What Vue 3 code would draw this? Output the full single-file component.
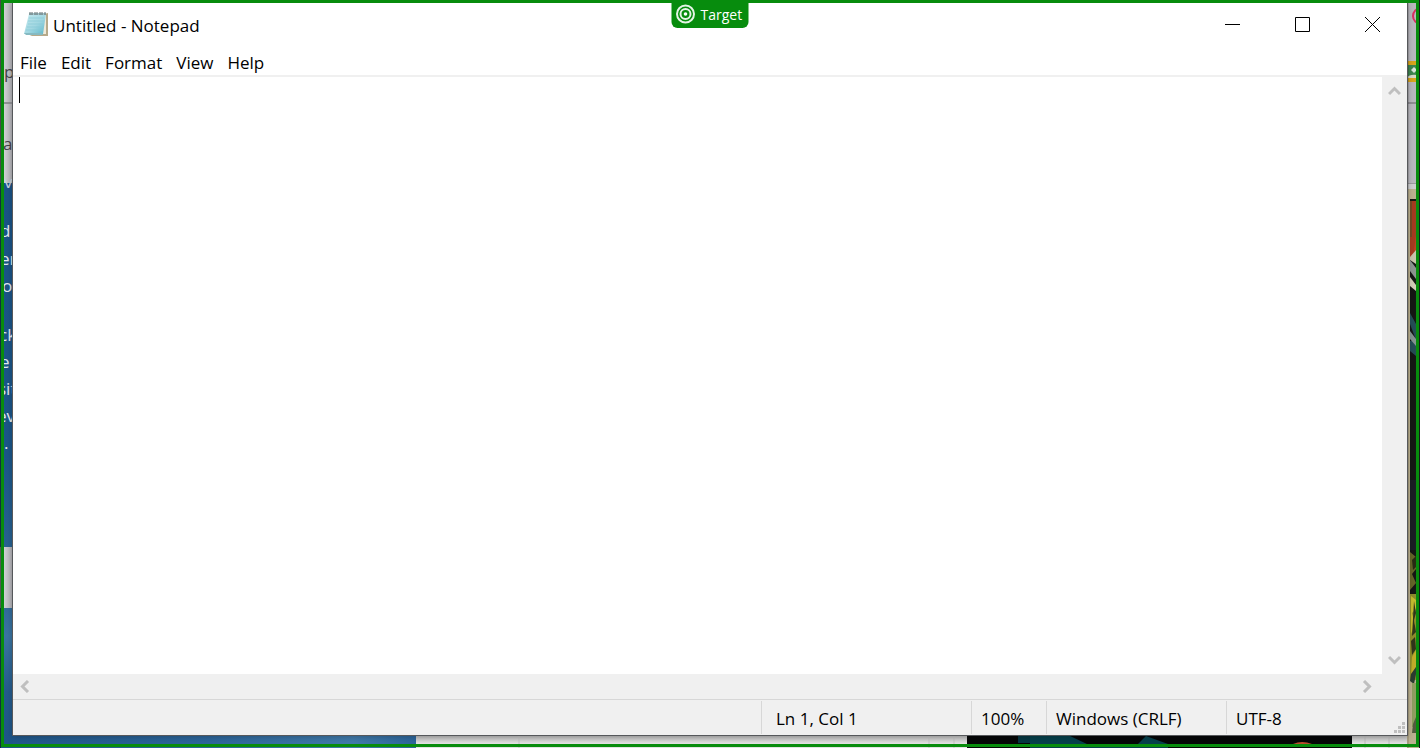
<script setup>
import { ref } from 'vue'

const content = ref('')
const menus = ['File', 'Edit', 'Format', 'View', 'Help']
const pageText = [
  { t: 'p', x: 4, y: 78, c: '#454349' },
  { t: 'a', x: 3, y: 150, c: '#454349' },
  { t: 'v', x: 4, y: 188, c: '#c5d4e0' },
  { t: 'd', x: 0, y: 237, c: '#e4ebf1' },
  { t: 'er', x: 0, y: 265, c: '#e4ebf1' },
  { t: 'o', x: 2, y: 292, c: '#e4ebf1' },
  { t: 'ck', x: -1, y: 341, c: '#e4ebf1' },
  { t: 'e', x: 0, y: 368, c: '#e4ebf1' },
  { t: 'sit', x: -2, y: 395, c: '#e4ebf1' },
  { t: 'ev', x: -3, y: 422, c: '#e4ebf1' },
  { t: '.', x: 4, y: 449, c: '#e4ebf1' },
]
</script>

<template>
  <div class="desktop">
    <div class="backdrop" aria-hidden="true">
      <svg class="bottom" viewBox="0 0 1420 14" preserveAspectRatio="none">
        <defs>
          <linearGradient id="shade" x1="0" x2="0" y1="0" y2="1">
            <stop offset="0" stop-color="#b2b2b2" />
            <stop offset="0.7" stop-color="#e2e2e2" />
          </linearGradient>
          <linearGradient id="sea" x1="0" x2="1" y1="0" y2="0">
            <stop offset="0" stop-color="#1f5689" />
            <stop offset="0.5" stop-color="#2c659a" />
            <stop offset="0.85" stop-color="#407aaa" />
            <stop offset="1" stop-color="#2c659a" />
          </linearGradient>
        </defs>
        <rect width="1420" height="14" fill="url(#shade)" />
        <rect width="416" height="14" fill="url(#sea)" />
        <path d="M519 0V14M929 0V14M954 0V14" stroke="#c3c3c3" />
        <rect x="967" width="385" height="14" fill="#050607" />
        <path d="M1018 0H1065L1080 9H1018Z" fill="#053642" />
        <path d="M1030 1H1068L1087 10H1138L1146 2L1168 10V14H1030Z" fill="#06404c" />
        <path d="M1293 10Q1302 6 1312 10Z" fill="#ba4e2d" />
        <path d="M1365 0V14M1389 0V14" stroke="#bcbcbc" />
      </svg>

      <svg class="left" width="13" height="748" viewBox="0 0 13 748">
        <defs>
          <linearGradient id="gray" x1="0" x2="1">
            <stop offset="0.3" stop-color="#d0d0d4" />
            <stop offset="1" stop-color="#aeaeb3" />
          </linearGradient>
          <linearGradient id="ocean" x1="0" x2="0" y1="0" y2="1">
            <stop offset="0" stop-color="#1a5386" />
            <stop offset="0.75" stop-color="#1b5689" />
            <stop offset="1" stop-color="#286292" />
          </linearGradient>
          <linearGradient id="wave" x1="0" x2="0" y1="0" y2="1">
            <stop offset="0" stop-color="#326b9b" />
            <stop offset="0.2" stop-color="#3b75a2" />
            <stop offset="0.6" stop-color="#245b8d" />
            <stop offset="1" stop-color="#1d5588" />
          </linearGradient>
        </defs>
        <rect width="13" height="748" fill="url(#gray)" />
        <rect y="102" width="13" height="2" fill="#919196" />
        <rect y="183" width="13" height="364" fill="url(#ocean)" />
        <rect y="608" width="13" height="140" fill="url(#wave)" />
        <text v-for="line in pageText" :key="line.y" :x="line.x" :y="line.y" :fill="line.c">{{ line.t }}</text>
        <rect width="1" height="748" fill="#112d40" />
        <rect width="1" height="183" fill="#48464a" />
        <rect y="547" width="1" height="61" fill="#555" />
      </svg>

      <svg class="right" width="13" height="748" viewBox="0 0 13 748">
        <rect width="13" height="748" fill="#b9b8be" />
        <circle cx="14" cy="16" r="8" fill="none" stroke="#d83062" stroke-width="2" />
        <rect y="61" width="13" height="21" fill="#d9a51d" />
        <rect y="65" width="13" height="13" fill="#3e8550" />
        <path d="M4 70L7 67L10 70L7 73Z" fill="#dce5dd" />
        <path d="M0 78Q2 74 10 75V78Z" fill="#d8d9c8" />
        <rect y="102" width="13" height="2" fill="#8e8d92" />
        <rect y="183" width="13" height="1" fill="#9b9b9e" />
        <rect y="184" width="13" height="5" fill="#cecfd0" />
        <rect y="189" width="13" height="559" fill="#bcb190" />
        <rect x="3" y="199" width="10" height="406" fill="#151614" />
        <rect x="3" y="201" width="8" height="56" fill="#a63b20" />
        <path d="M3 201H5V237H3Z" fill="#764824" />
        <path d="M9 235L11 230V257L7 250Z" fill="#c04021" />
        <path d="M3 257L9 250V264L3 260Z" fill="#c9c5ac" />
        <path d="M3 260L9 268V279L3 271Z" fill="#8d9691" />
        <path d="M3 277L9 285V291L3 286Z" fill="#d2ceb8" />
        <path d="M3 313L9 324V340L3 324ZM3 341H9V356L3 351Z" fill="#254d55" />
        <path d="M3 331L9 339V346L3 339Z" fill="#859491" />
        <rect x="3" y="480" width="6" height="70" fill="#1a1d24" />
        <path d="M3 552L9 557V569L5 574L9 583L3 590Z" fill="#656529" />
        <path d="M5 560L9 556V567L6 570Z" fill="#282b13" />
        <rect x="3" y="594" width="10" height="86" fill="#8d8d2c" />
        <path d="M4 596L9 600V609L5 613L8 624L4 634Z" fill="#c5bc2f" />
        <path d="M7 601L9 613L7 620L9 632L5 636ZM4 641L8 637L9 649L5 655Z" fill="#30351a" />
        <path d="M5 657L9 650V667L4 676Z" fill="#c0ad2a" />
        <path d="M4 674L9 667V674L7 684L3 681Z" fill="#2b3b30" />
        <rect x="5" y="683" width="8" height="44" fill="#8f9e60" />
        <path d="M6 724L9 717V733H5Z" fill="#535b40" />
        <rect width="2" height="748" fill="#000" opacity=".12" />
        <rect x="12" width="1" height="748" fill="#151719" />
      </svg>
    </div>

    <main class="window">
      <header class="titlebar">
        <svg class="app-icon" width="24" height="26" viewBox="0 0 24 26" aria-hidden="true">
          <defs>
            <linearGradient id="paper" x1="0" y1="0" x2="1" y2="1">
              <stop offset="0" stop-color="#c4e9ef" />
              <stop offset=".55" stop-color="#a1d7e1" />
              <stop offset="1" stop-color="#59b5ca" />
            </linearGradient>
          </defs>
          <path d="M20 3L24 2V25H8L1 22Z" fill="#b6a98a" />
          <path d="M20 3H22V23H6V22L18 22Z" fill="#eee9d8" />
          <path d="M5 3H22L19 23H0Z" fill="url(#paper)" />
          <path d="M5 7H20M4 10H20M4 13H19M3 16H19M2 19H19" stroke="#87c8d5" stroke-width=".7" />
          <path d="M0 22H18L19 24H2Z" fill="#86bac2" />
          <path d="M5 3H22" stroke="#a5c5ca" stroke-width="2" />
          <path d="M6 1V4M8 1V4M11 1V4M13 1V4M16 1V4M18 1V4M21 1V4" stroke="#5e6c6e" />
        </svg>
        <h1>Untitled - Notepad</h1>
        <div class="controls">
          <button aria-label="Minimize"><svg width="15" height="15"><path d="M0 7.5H15" /></svg></button>
          <button aria-label="Maximize"><svg width="15" height="15"><path d="M.5 .5H14.5V14.5H.5Z" /></svg></button>
          <button aria-label="Close"><svg width="15" height="15"><path d="M0 0L15 15M15 0L0 15" /></svg></button>
        </div>
      </header>

      <nav class="menubar" aria-label="Menu">
        <button v-for="m in menus" :key="m">{{ m }}</button>
      </nav>

      <section class="editor">
        <div class="page">
          <textarea v-model="content" aria-label="Document text" spellcheck="false" wrap="off"></textarea>
          <span class="caret"></span>
        </div>
        <div class="vscroll">
          <button aria-label="Scroll up"><svg width="13" height="11" viewBox="0 0 13 11"><path d="M1 9L6.500 3.500L12 9" /></svg></button>
          <button aria-label="Scroll down"><svg width="13" height="11" viewBox="0 0 13 11"><path d="M1 2L6.500 7.500L12 2" /></svg></button>
        </div>
        <div class="hscroll">
          <button aria-label="Scroll left"><svg width="11" height="13" viewBox="0 0 11 13"><path d="M8 1L2.500 6.500L8 12" /></svg></button>
          <button aria-label="Scroll right"><svg width="11" height="13" viewBox="0 0 11 13"><path d="M2 1L7.500 6.500L2 12" /></svg></button>
        </div>
      </section>

      <footer class="status">
        <span class="position">Ln 1, Col 1</span>
        <span class="zoom">100%</span>
        <span class="ending">Windows (CRLF)</span>
        <span class="encoding">UTF-8</span>
        <svg class="grip" width="11" height="11" viewBox="0 0 11 11" aria-hidden="true">
          <path d="M8 0h3v3H8zM4 4h3v3H4zM8 4h3v3H8zM0 8h3v3H0zM4 8h3v3H4zM8 8h3v3H8z" />
        </svg>
      </footer>
    </main>

    <div class="frame"></div>
    <div class="target">
      <svg width="20" height="20" viewBox="0 0 20 20" aria-hidden="true">
        <circle cx="10" cy="10" r="8.5" /><circle cx="10" cy="10" r="5" /><circle class="dot" cx="10" cy="10" r="1.8" />
      </svg>
      <span>Target</span>
    </div>
  </div>
</template>

<style>
body {
  margin: 0;
  overflow: hidden;
}
</style>

<style scoped>
.desktop {
  position: relative;
  box-sizing: border-box;
  height: 100vh;
  padding: 3px 12px 12px;
  font-family: "Open Sans", "Noto Sans", sans-serif;
  font-size: 17px;
  color: #000;
  overflow: hidden;
}
.desktop *,
.desktop *::before {
  box-sizing: border-box;
}
.backdrop {
  position: absolute;
  inset: 0;
}
.backdrop svg {
  position: absolute;
}
.backdrop .left {
  left: 0;
  top: 0;
  font-size: 17px;
  font-weight: 500;
}
.backdrop .right {
  right: 0;
  top: 0;
}
.backdrop .bottom {
  left: 0;
  bottom: 0;
  width: 100%;
  height: 14px;
}
.window {
  position: relative;
  display: flex;
  flex-direction: column;
  height: 100%;
  background: #fff;
  border: 1px solid #56585b;
  border-top: 0;
  box-shadow: 0 1px 6px rgba(0, 0, 0, 0.25);
}
.titlebar {
  display: flex;
  align-items: center;
  height: 45px;
  padding-left: 11px;
}
.app-icon {
  margin-bottom: 3px;
}
h1 {
  margin: 0 0 0 5px;
  font-size: 17px;
  font-weight: 400;
}
button {
  padding: 0;
  border: 0;
  background: none;
  font: inherit;
  color: inherit;
}
.controls {
  display: flex;
  align-self: stretch;
  margin-left: auto;
}
.controls button {
  display: grid;
  place-items: center;
  width: 70px;
  height: 43px;
}
.controls svg {
  fill: none;
  stroke: #000;
  stroke-width: 1;
}
.menubar {
  display: flex;
  align-items: center;
  gap: 14px;
  height: 29px;
  padding: 2px 7px 0;
  border-bottom: 2px solid #f0f0f0;
}
.editor {
  flex: 1;
  min-height: 0;
  display: grid;
  grid-template-columns: 1fr 25px;
  grid-template-rows: 1fr 25px;
  background: #f0f0f0;
}
.page {
  position: relative;
  background: #fff;
}
textarea {
  display: block;
  width: 100%;
  height: 100%;
  padding: 1px 6px;
  border: 0;
  outline: 0;
  resize: none;
  overflow: hidden;
  background: #fff;
  font-family: "Liberation Mono", monospace;
  font-size: 20px;
}
.caret {
  position: absolute;
  left: 6px;
  top: 0;
  width: 1px;
  height: 26px;
  background: #000;
}
.vscroll,
.hscroll {
  display: flex;
  justify-content: space-between;
}
.vscroll {
  flex-direction: column;
}
.vscroll button,
.hscroll button {
  display: grid;
  place-items: center;
  width: 25px;
  height: 27px;
}
.hscroll button {
  height: 25px;
}
.hscroll button:last-child {
  width: 29px;
}
.vscroll svg,
.hscroll svg {
  fill: none;
  stroke: #bfbfbf;
  stroke-width: 3;
}
.status {
  position: relative;
  display: flex;
  justify-content: flex-end;
  height: 36px;
  padding: 1px 0;
  background: #f0f0f0;
  border-top: 1px solid #d7d7d7;
}
.status span {
  display: flex;
  align-items: center;
  padding: 2px 9px 0;
  border-left: 1px solid #d7d7d7;
}
.status .position {
  width: 210px;
  padding-left: 14px;
}
.zoom {
  width: 75px;
}
.ending {
  width: 180px;
}
.encoding {
  width: 181px;
}
.grip {
  position: absolute;
  right: 2px;
  bottom: 2px;
  fill: #bfbfbf;
}
.frame {
  position: absolute;
  inset: 0 1px 1px;
  border: 3px solid #078c0d;
  pointer-events: none;
}
.target {
  position: absolute;
  top: 0;
  left: 50%;
  display: flex;
  align-items: center;
  gap: 5px;
  width: 77px;
  height: 28px;
  padding-left: 4px;
  transform: translateX(-50%);
  border-radius: 0 0 6px 6px;
  background: #078c0d;
  color: #fff;
  font-size: 14px;
}
.target svg {
  fill: none;
  stroke: #e5f4e5;
  stroke-width: 2;
}
.target .dot {
  fill: #fff;
  stroke: none;
}
</style>
